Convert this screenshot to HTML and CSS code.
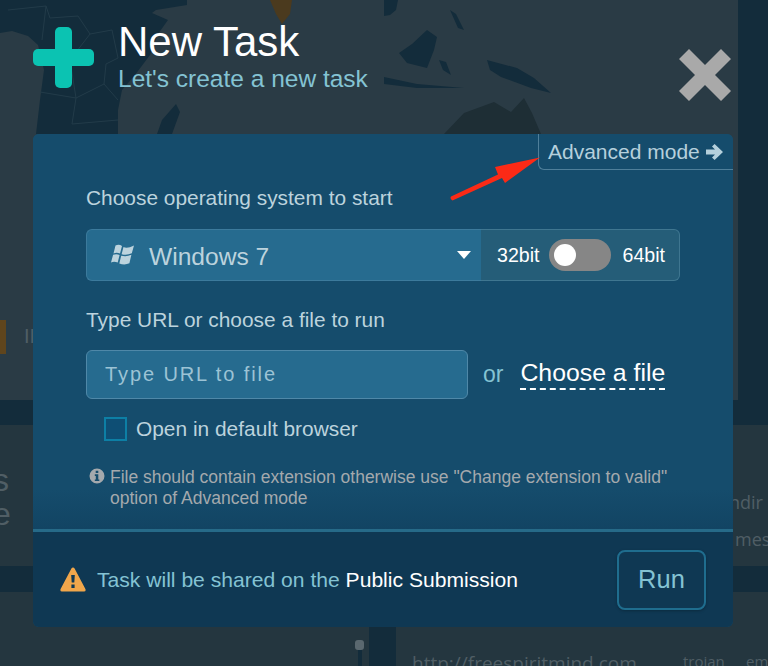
FILE: index.html
```html
<!DOCTYPE html>
<html lang="en">
<head>
    <meta charset="UTF-8">
    <meta name="viewport" content="width=device-width, initial-scale=1.0">
    <title>New Task</title>
    <link rel="stylesheet" href="styles.css">
</head>
<body>
    <!-- dimmed page behind the dialog -->
    <div class="backdrop">
        <svg class="map" width="768" height="134" viewBox="0 0 768 134">
            <path class="land" d="M0 0H187V5L156 10L152 13L168 20L158 34L150 55L135 75L122 90L118 110L118 134H36L40 100L44 70L38 45L28 36L12 31L0 33Z"/>
            <path class="border" d="M8 10L46 6L50 18L78 16L90 34L112 30L118 58L106 64L104 84L76 98L72 124M46 6L42 40M76 98L40 92M104 84L118 100M90 34L70 60L76 98M72 124L118 120"/>
            <path class="land" d="M176 104L180 112L172 134H157L162 120Z"/>
            <path class="tip" d="M270 0H292L290 14L282 24L276 14Z"/>
            <path class="land" d="M384 0H398L396 10L390 15L384 16ZM399 53L412 44L427 30L437 37L434 50L427 68L407 63ZM439 60L446 62L451 75L443 70ZM450 10L456 14L464 30L458 28ZM487 60L517 68L534 78L551 93L531 88L501 77L490 70ZM384 77L417 84L464 88L417 88L384 84ZM738 0H768V134H738Z"/>
            <path class="land-dim" d="M444 134L464 113L494 102L511 112L524 98L532 113L541 134Z"/>
        </svg>
        <div class="band band-1"></div>
        <div class="band band-2"></div>
        <div class="band band-3"></div>
        <div class="band band-4"></div>
        <div class="band band-5"></div>
        <div class="stub-orange"></div>
        <span class="stub stub-bars">II</span>
        <span class="stub stub-s">s</span>
        <span class="stub stub-e">e</span>
        <span class="stub stub-ndir">ndir</span>
        <span class="stub stub-mes">mes</span>
        <div class="scroll-track"></div>
        <div class="scroll-thumb"></div>
        <div class="table-gutter"></div>
        <span class="stub stub-url">http://freespiritmind.com</span>
        <span class="stub stub-trojan">trojan</span>
        <span class="stub stub-em">em</span>
    </div>

    <div class="modal">
        <header class="modal-head">
            <svg class="plus-icon" width="61" height="61" viewBox="0 0 61 61">
                <rect x="22" y="0" width="17" height="61" rx="5"/>
                <rect x="0" y="22" width="61" height="17" rx="5"/>
            </svg>
            <div class="modal-title">
                <h1>New Task</h1>
                <p>Let's create a new task</p>
            </div>
            <svg class="close-icon" width="52" height="52" viewBox="0 0 52 52">
                <path d="M10 0L26 16L42 0L52 10L36 26L52 42L42 52L26 36L10 52L0 42L16 26L0 10Z"/>
            </svg>
        </header>

        <section class="panel">
            <a class="advanced-tab">Advanced mode
                <svg width="18" height="18" viewBox="0 0 18 18">
                    <path d="M0 6.6H9L6 3.6L8.6 1L17 9L8.6 17L6 14.4L9 11.4H0Z"/>
                </svg>
            </a>

            <div class="panel-body">
                <label class="field-label">Choose operating system to start</label>
                <div class="os-row">
                    <div class="os-select">
                        <svg class="win-icon" width="23" height="22" viewBox="0 0 23 22">
                            <path d="M4.5 1.5Q8 0 11 2L9 9.6Q6 8 2.5 9.4ZM12.5 3Q16 5 23 1.5L20.8 9.3Q16 11.6 10.6 10.2ZM2.1 10.8Q5.5 9.6 8.6 11L6.7 18.6Q3.4 17 0 18.4ZM10.2 11.7Q15.5 13 20.4 10.8L18.4 19.3Q13.5 21.5 8.3 19.4Z"/>
                        </svg>
                        <span class="os-name">Windows 7</span>
                        <span class="caret"></span>
                    </div>
                    <div class="bit-switch">
                        <span>32bit</span>
                        <span class="toggle"><span class="knob"></span></span>
                        <span>64bit</span>
                    </div>
                </div>

                <label class="field-label field-label-url">Type URL or choose a file to run</label>
                <div class="url-row">
                    <div class="url-input">Type URL to file</div>
                    <span class="or">or</span>
                    <a class="choose-file">Choose a file</a>
                </div>

                <div class="check-row">
                    <span class="checkbox"></span>
                    <span>Open in default browser</span>
                </div>

                <div class="note">
                    <svg width="16" height="16" viewBox="0 0 16 16">
                        <path fill-rule="evenodd" d="M8 .5a7.5 7.5 0 1 0 0 15a7.5 7.5 0 0 0 0-15ZM6.7 2.8h2.6v2.3H6.7ZM5.8 6.3h3.5v5.2h1v1.6H5.8v-1.6h1V7.9h-1Z"/>
                    </svg>
                    <p>File should contain extension otherwise use "Change extension to valid" option of Advanced mode</p>
                </div>
            </div>

            <footer class="panel-foot">
                <svg class="warn-icon" width="26" height="25" viewBox="0 0 26 25">
                    <path fill-rule="evenodd" d="M13 0.5Q14 0.5 14.6 1.6L25.4 22Q26.2 24.5 24 24.5H2Q-.2 24.5 .6 22L11.4 1.6Q12 .5 13 .5ZM11.2 8L11.7 15.5H14.3L14.8 8ZM11.4 17.5V21H14.6V17.5Z"/>
                </svg>
                <p class="share-text">Task will be shared on the <strong>Public Submission</strong></p>
                <button class="run-btn">Run</button>
            </footer>
        </section>
    </div>

    <svg class="red-arrow" width="92" height="46" viewBox="0 0 92 46">
        <path d="M1 39.5L48 17.5L45 10L90 0.5L55 26L52 21L2.5 43.5Q-.5 42 1 39.5Z"/>
    </svg>
</body>
</html>
```

FILE: styles.css
```css
html, body {
    height: 100%;
}

body {
    margin: 0;
    height: 666px;
    overflow: hidden;
    position: relative;
    background-color: #2a3b45;
    font-family: "Liberation Sans", Arial, sans-serif;
}

/* background page */
.backdrop {
    position: absolute;
    inset: 0;
    overflow: hidden;
}

.map {
    position: absolute;
    left: 0;
    top: 0;
}

.land {
    fill: #132c3b;
}

.land-dim {
    fill: #1e2e35;
}

.border {
    fill: none;
    stroke: #223b49;
    stroke-width: 1;
}

.tip {
    fill: #4b3a1e;
}

.band {
    position: absolute;
    background-color: #132c3b;
}

.band-1 {
    left: 0;
    top: 400px;
    width: 768px;
    height: 25px;
}

.band-2 {
    left: 0;
    top: 566px;
    width: 768px;
    height: 26px;
}

.band-3 {
    left: 738px;
    top: 134px;
    width: 30px;
    height: 266px;
}

.band-4 {
    left: 0;
    top: 425px;
    width: 768px;
    height: 141px;
    background-color: #24363f;
}

.band-5 {
    left: 0;
    top: 592px;
    width: 768px;
    height: 74px;
    background-color: #24363f;
}

.stub-orange {
    position: absolute;
    left: 0;
    top: 320px;
    width: 6px;
    height: 34px;
    background-color: #5f451d;
}

.stub {
    position: absolute;
    color: #505e65;
    white-space: nowrap;
}

.stub-bars {
    left: 24px;
    top: 325px;
    font-size: 20px;
}

.stub-s {
    left: -7px;
    top: 462px;
    font-size: 32px;
}

.stub-e {
    left: -7px;
    top: 496px;
    font-size: 32px;
}

.stub-ndir {
    left: 729px;
    top: 490px;
    font-size: 18px;
    font-family: "Open Sans", sans-serif;
}

.stub-mes {
    left: 735px;
    top: 527px;
    font-size: 18px;
    font-family: "Open Sans", sans-serif;
}

.scroll-track {
    position: absolute;
    left: 358px;
    top: 650px;
    width: 4px;
    height: 16px;
    background-color: #132c3b;
}

.scroll-thumb {
    position: absolute;
    left: 355px;
    top: 640px;
    width: 9px;
    height: 10px;
    border-radius: 3px;
    background-color: #5a686f;
}

.table-gutter {
    position: absolute;
    left: 369px;
    top: 627px;
    width: 27px;
    height: 39px;
    background-color: #132c3b;
}

.stub-url {
    left: 412px;
    top: 650px;
    font-size: 19px;
    font-family: "Open Sans", sans-serif;
}

.stub-trojan {
    left: 683px;
    top: 651px;
    font-size: 15px;
    font-family: "Open Sans", sans-serif;
}

.stub-em {
    left: 746px;
    top: 651px;
    font-size: 15px;
    font-family: "Open Sans", sans-serif;
}

/* dialog */
.modal {
    position: relative;
    width: 700px;
    margin-left: 33px;
}

.modal-head {
    height: 134px;
    display: flex;
    align-items: flex-start;
}

.plus-icon {
    fill: #0bc3b2;
    margin-top: 27px;
    flex: none;
}

.modal-title {
    margin-left: 24px;
    margin-top: 18px;
    flex: 1;
}

.modal-title h1 {
    margin: 0;
    font-size: 42px;
    line-height: 47px;
    font-weight: normal;
    color: #ffffff;
}

.modal-title p {
    margin: 0;
    font-size: 24.5px;
    line-height: 28px;
    color: #84c3d3;
}

.close-icon {
    fill: #a9a9a9;
    margin-top: 49px;
    margin-right: 2px;
    flex: none;
}

.panel {
    position: relative;
    height: 493px;
    display: flex;
    flex-direction: column;
    border-radius: 6px;
    overflow: hidden;
    background-color: #154c6c;
}

.advanced-tab {
    position: absolute;
    right: 0;
    top: 0;
    width: 195px;
    height: 36px;
    box-sizing: border-box;
    padding-left: 9px;
    display: flex;
    align-items: center;
    gap: 6px;
    border-left: 1px solid #4f7f9a;
    border-bottom: 1px solid #4f7f9a;
    border-bottom-left-radius: 6px;
    font-size: 21px;
    color: #b5d0dc;
    fill: #b5d0dc;
}

.panel-body {
    flex: 1;
    padding: 51px 53px 0;
    background-image: linear-gradient(to bottom, #154c6c 90%, #124463 100%);
}

.field-label {
    display: block;
    font-size: 20.9px;
    line-height: 26px;
    color: #bcd3dd;
}

.os-row {
    margin-top: 18px;
    width: 594px;
    height: 52px;
    display: flex;
}

.os-select {
    width: 395px;
    box-sizing: border-box;
    display: flex;
    align-items: center;
    padding-left: 24px;
    background-color: #266b8f;
    border: 1px solid #3c7a9c;
    border-right: none;
    border-radius: 6px 0 0 6px;
}

.win-icon {
    fill: #bcd3dd;
    flex: none;
}

.os-name {
    margin-left: 15px;
    margin-top: 3px;
    flex: 1;
    font-size: 24.6px;
    color: #bcd3dd;
}

.caret {
    width: 0;
    height: 0;
    margin-right: 10px;
    border-left: 7px solid transparent;
    border-right: 7px solid transparent;
    border-top: 8px solid #ffffff;
}

.bit-switch {
    flex: 1;
    display: flex;
    align-items: center;
    box-sizing: border-box;
    padding-left: 16px;
    background-color: #255d78;
    border: 1px solid #3f7690;
    border-left: none;
    border-radius: 0 6px 6px 0;
    font-size: 19.6px;
    color: #ffffff;
}

.toggle {
    width: 62px;
    height: 32px;
    margin: 0 12px 0 9px;
    box-sizing: border-box;
    padding: 5px;
    border-radius: 16px;
    background-color: #868686;
}

.knob {
    display: block;
    width: 22px;
    height: 22px;
    border-radius: 50%;
    background-color: #ffffff;
}

.field-label-url {
    margin-top: 26px;
}

.url-row {
    margin-top: 17px;
    display: flex;
    align-items: center;
}

.url-input {
    width: 382px;
    height: 49px;
    box-sizing: border-box;
    padding-left: 18px;
    display: flex;
    align-items: center;
    background-color: #266b8f;
    border: 1px solid #4f88a8;
    border-radius: 6px;
    font-size: 20px;
    letter-spacing: 1.9px;
    color: #9cc3d5;
}

.or {
    margin-left: 15px;
    font-size: 23px;
    color: #84c3d3;
}

.choose-file {
    margin-left: 17px;
    padding-bottom: 1px;
    font-size: 24.8px;
    line-height: 28px;
    color: #ffffff;
    border-bottom: 2px dashed #ffffff;
}

.check-row {
    margin-top: 18px;
    margin-left: 18px;
    display: flex;
    align-items: center;
    gap: 9px;
    font-size: 20.9px;
    color: #bcd3dd;
}

.checkbox {
    width: 23px;
    height: 24px;
    box-sizing: border-box;
    border: 2px solid #0d7fa5;
    background-color: #0e4e74;
}

.note {
    margin-top: 26px;
    margin-left: 3px;
    display: flex;
    gap: 5px;
    fill: #a4a9ad;
}

.note svg {
    flex: none;
    margin-top: 1px;
}

.note p {
    margin: 0;
    font-size: 17.5px;
    line-height: 21px;
    color: #a4a9ad;
}

.panel-foot {
    height: 98px;
    box-sizing: border-box;
    display: flex;
    align-items: center;
    padding: 0 27px;
    background-color: #0f3853;
    border-top: 3px solid #266a88;
}

.warn-icon {
    fill: #f0a64b;
    flex: none;
}

.share-text {
    margin: 0 0 0 11px;
    flex: 1;
    font-size: 21.1px;
    color: #84c3d3;
}

.share-text strong {
    font-weight: normal;
    color: #ffffff;
}

.run-btn {
    width: 89px;
    height: 60px;
    background-color: transparent;
    border: 2px solid #1f6d8e;
    border-radius: 8px;
    box-shadow: 0 1px 3px rgba(0, 0, 0, 0.25);
    font-family: inherit;
    font-size: 25.5px;
    color: #84c3d3;
}

/* annotation drawn over the screenshot */
.red-arrow {
    position: absolute;
    left: 450px;
    top: 157px;
    fill: #fb2a16;
}
```
